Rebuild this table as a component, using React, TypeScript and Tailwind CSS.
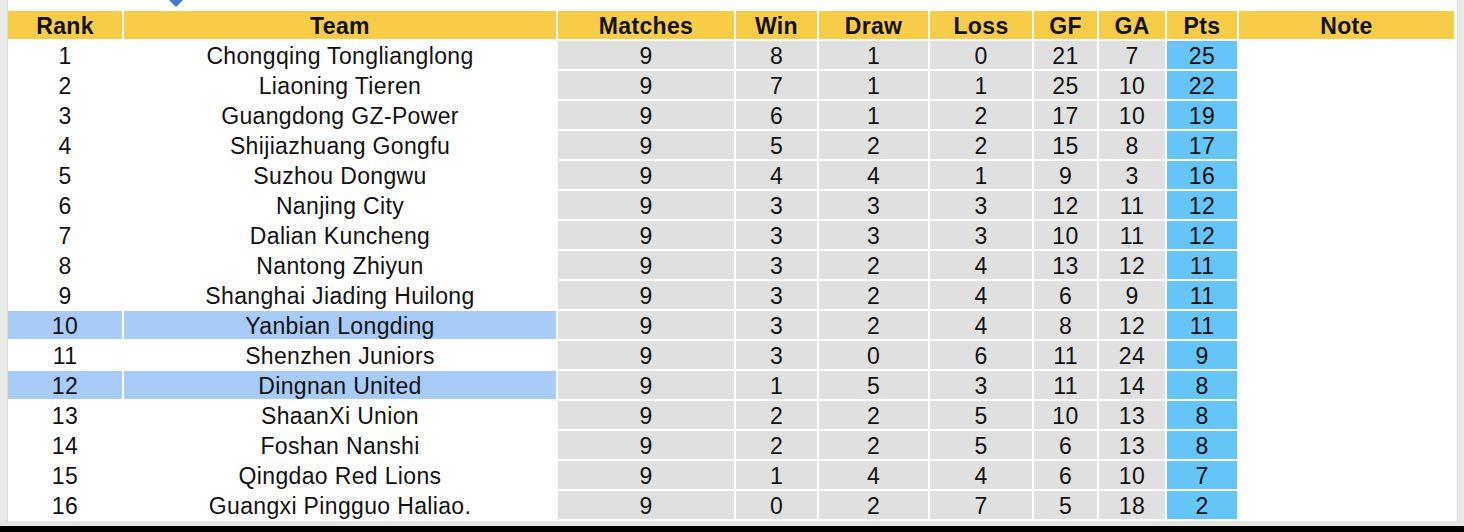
const HEADERS = ["Rank", "Team", "Matches", "Win", "Draw", "Loss", "GF", "GA", "Pts", "Note"];

type Row = [number, string, number, number, number, number, number, number, number];

const ROWS: Row[] = [
  [1, "Chongqing Tonglianglong", 9, 8, 1, 0, 21, 7, 25],
  [2, "Liaoning Tieren", 9, 7, 1, 1, 25, 10, 22],
  [3, "Guangdong GZ-Power", 9, 6, 1, 2, 17, 10, 19],
  [4, "Shijiazhuang Gongfu", 9, 5, 2, 2, 15, 8, 17],
  [5, "Suzhou Dongwu", 9, 4, 4, 1, 9, 3, 16],
  [6, "Nanjing City", 9, 3, 3, 3, 12, 11, 12],
  [7, "Dalian Kuncheng", 9, 3, 3, 3, 10, 11, 12],
  [8, "Nantong Zhiyun", 9, 3, 2, 4, 13, 12, 11],
  [9, "Shanghai Jiading Huilong", 9, 3, 2, 4, 6, 9, 11],
  [10, "Yanbian Longding", 9, 3, 2, 4, 8, 12, 11],
  [11, "Shenzhen Juniors", 9, 3, 0, 6, 11, 24, 9],
  [12, "Dingnan United", 9, 1, 5, 3, 11, 14, 8],
  [13, "ShaanXi Union", 9, 2, 2, 5, 10, 13, 8],
  [14, "Foshan Nanshi", 9, 2, 2, 5, 6, 13, 8],
  [15, "Qingdao Red Lions", 9, 1, 4, 4, 6, 10, 7],
  [16, "Guangxi Pingguo Haliao.", 9, 0, 2, 7, 5, 18, 2],
];

const HIGHLIGHT = [10, 12];

const cell = "h-[28px] pt-[2px] flex items-center justify-center";

export default function App() {
  return (
    <div className="w-[1464px] h-[532px] flex flex-col bg-white overflow-hidden font-['Liberation_Sans',Arial,sans-serif] text-[23px] leading-none tracking-[0.35px] text-[#111]">
      <div className="flex flex-1">
        {/* left edge */}
        <div className="w-[8px] bg-[#ebebea] border-r border-[#dcdcda]" />

        <div className="w-[1449px] flex flex-col">
          {/* top strip */}
          <div className="h-[11px] relative">
            <svg className="absolute left-[160px] top-[-9px]" width="16" height="16" viewBox="0 0 16 16">
              <polygon points="8,0 16,8 8,16 0,8" fill="#3f7bd6" />
            </svg>
          </div>

          {/* table */}
          <div className="w-[1446px] grid grid-cols-[114px_432px_176px_81px_109px_102px_63px_66px_70px_215px] gap-[2px]">
            {HEADERS.map(h => (
              <div key={h} className={`${cell} bg-[#f7cc47] font-bold`}>
                {h}
              </div>
            ))}
            {ROWS.map(r => {
              const hl = HIGHLIGHT.includes(r[0]);
              const lead = hl ? "bg-[#a8cbf7]" : "bg-white";
              return [
                <div key={`${r[0]}-rank`} className={`${cell} ${lead}`}>{r[0]}</div>,
                <div key={`${r[0]}-team`} className={`${cell} ${lead}`}>{r[1]}</div>,
                ...r.slice(2, 8).map((v, i) => (
                  <div key={`${r[0]}-s${i}`} className={`${cell} bg-[#e0e0e0]`}>{v}</div>
                )),
                <div key={`${r[0]}-pts`} className={`${cell} bg-[#66c5f7]`}>{r[8]}</div>,
                <div key={`${r[0]}-note`} className={`${cell} bg-white`} />,
              ];
            })}
          </div>
        </div>

        {/* right edge */}
        <div className="flex-1 bg-[#e9e9e8] border-l border-[#d8d8d6]" />
      </div>

      {/* bottom edge */}
      <div className="h-[5px] bg-[#e4e4e2]" />
      <div className="h-[6px] bg-black" />
    </div>
  );
}
